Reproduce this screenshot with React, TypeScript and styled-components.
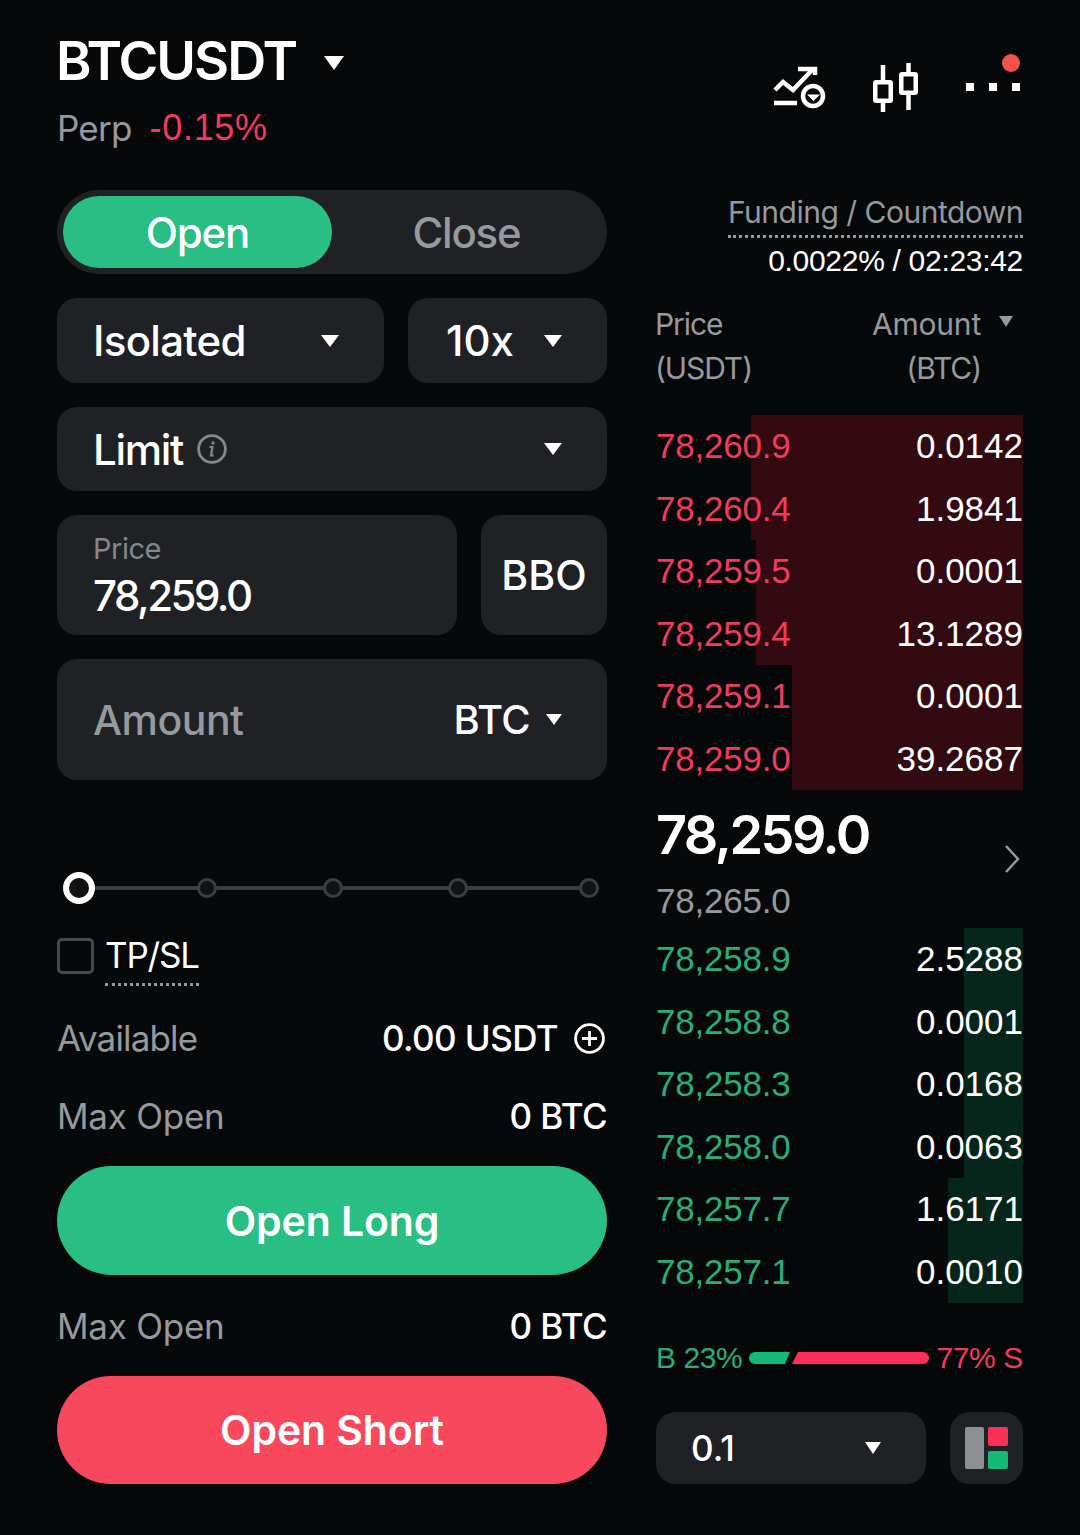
import * as React from 'react';
import styled, { createGlobalStyle } from 'styled-components';

const red = '#f8485e';
const green = '#29bf84';
const redText = '#f03a5f';
const greenText = '#27ae7c';
const panel = '#1f2125';
const muted = '#96999e';
const numeric = '"Liberation Sans", Arial, sans-serif';

const GlobalStyle = createGlobalStyle`
  html, body {
    margin: 0;
    padding: 0;
    background: #060809;
  }
  * {
    box-sizing: border-box;
  }
`;

const Page = styled.div`
  width: 1080px;
  height: 1535px;
  overflow: hidden;
  padding: 0 57px;
  background: #060809;
  color: #fff;
  font-family: Inter, "Liberation Sans", sans-serif;
`;

const Header = styled.header`
  display: flex;
  justify-content: space-between;
  height: 190px;
`;

const TitleBlock = styled.div`
  padding-top: 29px;
`;

const TitleRow = styled.div`
  display: flex;
  align-items: center;
  height: 62px;
  gap: 28px;
`;

const Title = styled.h1`
  margin: 0 0 0 -1px;
  font-size: 54px;
  font-weight: 600;
  letter-spacing: -2px;
`;

const TitleCaret = styled.div`
  margin-top: 6px;
`;

const SubRow = styled.div`
  display: flex;
  gap: 18px;
  margin-top: 17px;
  font-size: 35px;
  line-height: 40px;
`;

const Perp = styled.span`
  color: ${muted};
  letter-spacing: -0.8px;
`;

const Change = styled.span`
  color: ${redText};
  font-family: ${numeric};
  font-size: 36px;
  letter-spacing: 0.7px;
`;

const Toolbar = styled.div`
  display: flex;
  align-items: flex-start;
  gap: 40px;
  padding-top: 50px;
`;

const ToolIcon = styled.svg<{ $top?: number }>`
  display: block;
  flex: none;
  margin-top: ${({ $top }) => $top ?? 0}px;
`;

const Caret = styled.i<{ $w?: number; $h?: number; $color?: string }>`
  display: block;
  flex: none;
  width: 0;
  height: 0;
  border-left: ${({ $w }) => ($w ?? 18) / 2}px solid transparent;
  border-right: ${({ $w }) => ($w ?? 18) / 2}px solid transparent;
  border-top: ${({ $h }) => $h ?? 12}px solid ${({ $color }) => $color ?? '#fff'};
`;

const Columns = styled.div`
  display: grid;
  grid-template-columns: 550px 367px;
  gap: 49px;
`;

const LeftColumn = styled.section`
  display: flex;
  flex-direction: column;
`;

const Tabs = styled.div`
  display: grid;
  grid-template-columns: 269px 1fr;
  height: 84px;
  padding: 6px;
  border-radius: 42px;
  background: ${panel};
`;

const Tab = styled.div<{ $active?: boolean }>`
  display: flex;
  align-items: center;
  justify-content: center;
  border-radius: 36px;
  background: ${({ $active }) => ($active ? green : 'transparent')};
  color: ${({ $active }) => ($active ? '#fff' : muted)};
  font-size: 42px;
  font-weight: 500;
  letter-spacing: -1.2px;
`;

const FieldRow = styled.div`
  display: flex;
  gap: 24px;
  margin-top: 24px;
`;

const Field = styled.div<{ $width?: number; $height?: number; $pad?: number }>`
  display: flex;
  align-items: center;
  justify-content: space-between;
  flex: ${({ $width }) => ($width ? `0 0 ${$width}px` : '1 1 auto')};
  height: ${({ $height }) => $height ?? 85}px;
  padding: 0 45px 0 ${({ $pad }) => $pad ?? 36}px;
  border-radius: 20px;
  background: ${panel};
`;

const FieldText = styled.span<{ $spacing?: number }>`
  display: flex;
  align-items: center;
  gap: 14px;
  font-size: 42px;
  font-weight: 500;
  letter-spacing: ${({ $spacing }) => $spacing ?? -0.7}px;
`;

const PriceField = styled.div`
  display: flex;
  flex-direction: column;
  justify-content: center;
  flex: 1;
  height: 120px;
  padding: 0 36px;
  border-radius: 20px;
  background: ${panel};
`;

const PriceLabel = styled.span`
  margin-top: 2px;
  color: #85878b;
  font-size: 29px;
  line-height: 34px;
  letter-spacing: -0.5px;
`;

const PriceValue = styled.span`
  margin-top: 5px;
  font-size: 42px;
  line-height: 50px;
  font-weight: 500;
  letter-spacing: -2.5px;
`;

const BboButton = styled.div`
  display: flex;
  align-items: center;
  justify-content: center;
  width: 126px;
  height: 120px;
  border-radius: 20px;
  background: ${panel};
  font-size: 41px;
  font-weight: 500;
`;

const AmountLabel = styled.span`
  color: ${muted};
  font-size: 41px;
  font-weight: 500;
  letter-spacing: -0.5px;
`;

const AmountUnit = styled.span`
  display: flex;
  align-items: center;
  gap: 16px;
  font-size: 40px;
  font-weight: 500;
  letter-spacing: -0.6px;
`;

const Slider = styled.div`
  position: relative;
  display: flex;
  align-items: center;
  height: 32px;
  margin: 92px 0 0 6px;
`;

const SliderTrack = styled.div`
  position: absolute;
  left: 10px;
  right: 15px;
  top: 14px;
  height: 4px;
  background: #3a3c3f;
`;

const SliderDot = styled.div<{ $active?: boolean; $left?: number }>`
  position: relative;
  flex: none;
  width: ${({ $active }) => ($active ? 32 : 20)}px;
  height: ${({ $active }) => ($active ? 32 : 20)}px;
  margin-left: ${({ $left }) => $left ?? 0}px;
  border-radius: 50%;
  border: ${({ $active }) => ($active ? '6px solid #fff' : '3px solid #3c3e41')};
  background: #101214;
`;

const CheckRow = styled.div`
  display: flex;
  gap: 11px;
  margin-top: 34px;
  height: 48px;
`;

const Checkbox = styled.div`
  width: 37px;
  height: 36px;
  border: 3px solid #46484c;
  border-radius: 5px;
`;

const CheckLabel = styled.span`
  height: 48px;
  border-bottom: 3px dotted ${muted};
  font-size: 35px;
  line-height: 35px;
  letter-spacing: -1.2px;
`;

const InfoRow = styled.div<{ $top: number }>`
  display: flex;
  align-items: center;
  justify-content: space-between;
  height: 44px;
  margin-top: ${({ $top }) => $top}px;
`;

const InfoLabel = styled.span<{ $spacing: number }>`
  color: ${muted};
  font-size: 35px;
  letter-spacing: ${({ $spacing }) => $spacing}px;
`;

const InfoValue = styled.span`
  display: flex;
  align-items: center;
  gap: 16px;
  font-size: 35px;
  font-weight: 500;
  letter-spacing: -0.6px;
`;

const ActionButton = styled.div<{ $color: string; $height: number }>`
  display: flex;
  align-items: center;
  justify-content: center;
  height: ${({ $height }) => $height}px;
  margin-top: 28px;
  border-radius: 55px;
  background: ${({ $color }) => $color};
  font-size: 41px;
  font-weight: 600;
  letter-spacing: -0.1px;
`;

const RightColumn = styled.section`
  display: flex;
  flex-direction: column;
`;

const Funding = styled.div`
  display: flex;
  flex-direction: column;
  align-items: flex-end;
  height: 90px;
`;

const FundingLabel = styled.span`
  height: 48px;
  padding-top: 3px;
  border-bottom: 3px dotted ${muted};
  color: ${muted};
  font-size: 30px;
  line-height: 38px;
  letter-spacing: -0.5px;
`;

const FundingValue = styled.span`
  margin-top: 4px;
  font-family: ${numeric};
  font-size: 30px;
  line-height: 38px;
  letter-spacing: -0.3px;
`;

const BookHead = styled.div`
  display: flex;
  justify-content: space-between;
  height: 135px;
  padding-top: 22px;
  color: ${muted};
  font-size: 30px;
  line-height: 44px;
`;

const HeadCol = styled.div`
  display: flex;
  flex-direction: column;
  margin-left: -1px;
  letter-spacing: -1.1px;
`;

const HeadRight = styled(HeadCol)`
  align-items: flex-end;
  padding-right: 10px;
`;

const HeadTop = styled.span`
  display: flex;
  align-items: center;
  gap: 18px;
  letter-spacing: -0.2px;
`;

const HeadCaret = styled.div`
  margin-top: -6px;
`;

const HeadUnit = styled.span`
  padding-right: 32px;
`;

const Book = styled.div`
  display: flex;
  flex-direction: column;
  height: 375px;
`;

const BookRow = styled.div`
  position: relative;
  display: flex;
  align-items: center;
  justify-content: space-between;
  height: 62.5px;
  font-family: ${numeric};
  font-size: 35px;
`;

const DepthBar = styled.div<{ $color: string }>`
  position: absolute;
  top: 0;
  right: 0;
  bottom: 0;
  background: ${({ $color }) => $color};
`;

const RowPrice = styled.span<{ $color: string }>`
  position: relative;
  color: ${({ $color }) => $color};
  letter-spacing: -0.2px;
`;

const RowAmount = styled.span`
  position: relative;
`;

const Ticker = styled.div`
  display: flex;
  align-items: center;
  justify-content: space-between;
  height: 138px;
  padding-right: 2px;
`;

const TickerPrices = styled.div`
  display: flex;
  flex-direction: column;
  align-self: flex-start;
  padding-top: 13px;
`;

const LastPrice = styled.span`
  font-size: 54px;
  line-height: 64px;
  font-weight: 600;
  letter-spacing: -2.5px;
`;

const MarkPrice = styled.span`
  margin-top: 12px;
  color: ${muted};
  font-family: ${numeric};
  font-size: 35px;
  line-height: 44px;
  letter-spacing: -0.2px;
`;

const Ratio = styled.div`
  display: flex;
  align-items: center;
  height: 44px;
  margin-top: 33px;
  font-family: ${numeric};
  font-size: 30px;
  letter-spacing: -0.4px;
`;

const RatioText = styled.span<{ $color: string }>`
  flex: none;
  color: ${({ $color }) => $color};
`;

const RatioBar = styled.svg`
  display: block;
  flex: none;
  margin: 0 6px;
`;

const BottomRow = styled.div`
  display: flex;
  justify-content: space-between;
  margin-top: 32px;
`;

const StepSelect = styled.div`
  display: flex;
  align-items: center;
  justify-content: space-between;
  width: 270px;
  height: 72px;
  padding: 0 45px 0 35px;
  border-radius: 20px;
  background: ${panel};
  font-size: 35px;
  font-weight: 500;
`;

const LayoutButton = styled.div`
  display: flex;
  align-items: center;
  justify-content: center;
  width: 73px;
  height: 72px;
  border-radius: 20px;
  background: ${panel};
`;

const asks = [
  { price: '78,260.9', amount: '0.0142', bar: 272 },
  { price: '78,260.4', amount: '1.9841', bar: 272 },
  { price: '78,259.5', amount: '0.0001', bar: 267 },
  { price: '78,259.4', amount: '13.1289', bar: 267 },
  { price: '78,259.1', amount: '0.0001', bar: 231 },
  { price: '78,259.0', amount: '39.2687', bar: 231 },
];

const bids = [
  { price: '78,258.9', amount: '2.5288', bar: 59 },
  { price: '78,258.8', amount: '0.0001', bar: 59 },
  { price: '78,258.3', amount: '0.0168', bar: 59 },
  { price: '78,258.0', amount: '0.0063', bar: 59 },
  { price: '78,257.7', amount: '1.6171', bar: 75 },
  { price: '78,257.1', amount: '0.0010', bar: 75 },
];

const App: React.FC = () => {
  return (
    <Page>
      <GlobalStyle />
      <Header>
        <TitleBlock>
          <TitleRow>
            <Title>BTCUSDT</Title>
            <TitleCaret>
              <Caret $w={21} $h={14} />
            </TitleCaret>
          </TitleRow>
          <SubRow>
            <Perp>Perp</Perp>
            <Change>-0.15%</Change>
          </SubRow>
        </TitleBlock>
        <Toolbar>
          <ToolIcon $top={10} width="60" height="52" viewBox="0 0 60 52" fill="none" stroke="#fff" strokeWidth="4.5">
            <path d="M5 30 L13 22 L23 30 L42 10" />
            <path d="M28 9 H45 V15" />
            <path d="M4 43 H27" />
            <circle cx="43" cy="36" r="10" />
            <path d="M37 34.5 H50 L43.5 41 Z" fill="#fff" stroke="none" />
          </ToolIcon>
          <ToolIcon $top={10} width="52" height="56" viewBox="0 0 52 56" fill="none" stroke="#fff" strokeWidth="4.5">
            <path d="M13 5 V20 M13 43 V52 M38.5 3 V12 M38.5 35 V50" />
            <rect x="5.25" y="22.25" width="15.5" height="18.5" rx="1" />
            <rect x="31.25" y="14.25" width="14.5" height="18.5" rx="1" />
          </ToolIcon>
          <ToolIcon width="61" height="45" viewBox="0 0 61 45">
            <rect x="4" y="33" width="8" height="8" fill="#fff" />
            <rect x="27" y="33" width="8" height="8" fill="#fff" />
            <rect x="50" y="33" width="8" height="8" fill="#fff" />
            <circle cx="49" cy="13" r="9" fill="#f4524d" />
          </ToolIcon>
        </Toolbar>
      </Header>
      <Columns>
        <LeftColumn>
          <Tabs>
            <Tab $active>Open</Tab>
            <Tab>Close</Tab>
          </Tabs>
          <FieldRow>
            <Field $width={327}>
              <FieldText>Isolated</FieldText>
              <Caret />
            </Field>
            <Field $pad={38}>
              <FieldText $spacing={0}>10x</FieldText>
              <Caret />
            </Field>
          </FieldRow>
          <FieldRow>
            <Field $height={84}>
              <FieldText $spacing={-1.3}>
                Limit
                <svg width="30" height="30" viewBox="0 0 30 30" fill="none" stroke="#85878b" strokeWidth="2.8">
                  <circle cx="15" cy="15" r="13.4" />
                  <path d="M12.5 13 H15.5 L14 21.5 H16.5" strokeWidth="2.2" />
                  <path d="M16 7.5 V10.5" />
                </svg>
              </FieldText>
              <Caret />
            </Field>
          </FieldRow>
          <FieldRow>
            <PriceField>
              <PriceLabel>Price</PriceLabel>
              <PriceValue>78,259.0</PriceValue>
            </PriceField>
            <BboButton>BBO</BboButton>
          </FieldRow>
          <FieldRow>
            <Field $height={121}>
              <AmountLabel>Amount</AmountLabel>
              <AmountUnit>
                BTC
                <Caret $w={16} $h={11} />
              </AmountUnit>
            </Field>
          </FieldRow>
          <Slider>
            <SliderTrack />
            <SliderDot $active />
            <SliderDot $left={102} />
            <SliderDot $left={106} />
            <SliderDot $left={105} />
            <SliderDot $left={111} />
          </Slider>
          <CheckRow>
            <Checkbox />
            <CheckLabel>TP/SL</CheckLabel>
          </CheckRow>
          <InfoRow $top={30}>
            <InfoLabel $spacing={-0.85}>Available</InfoLabel>
            <InfoValue>
              0.00 USDT
              <svg width="31" height="31" viewBox="0 0 31 31" fill="none" stroke="#fff" strokeWidth="2.8" style={{ marginRight: 2 }}>
                <circle cx="15.5" cy="15.5" r="13.9" />
                <path d="M15.5 8 V23 M8 15.5 H23" />
              </svg>
            </InfoValue>
          </InfoRow>
          <InfoRow $top={34}>
            <InfoLabel $spacing={-0.25}>Max Open</InfoLabel>
            <InfoValue>0 BTC</InfoValue>
          </InfoRow>
          <ActionButton $color={green} $height={109}>Open Long</ActionButton>
          <InfoRow $top={29}>
            <InfoLabel $spacing={-0.25}>Max Open</InfoLabel>
            <InfoValue>0 BTC</InfoValue>
          </InfoRow>
          <ActionButton $color={red} $height={108}>Open Short</ActionButton>
        </LeftColumn>
        <RightColumn>
          <Funding>
            <FundingLabel>Funding / Countdown</FundingLabel>
            <FundingValue>0.0022% / 02:23:42</FundingValue>
          </Funding>
          <BookHead>
            <HeadCol>
              <span>Price</span>
              <span>(USDT)</span>
            </HeadCol>
            <HeadRight>
              <HeadTop>
                Amount
                <HeadCaret>
                  <Caret $w={15} $h={11} $color={muted} />
                </HeadCaret>
              </HeadTop>
              <HeadUnit>(BTC)</HeadUnit>
            </HeadRight>
          </BookHead>
          <Book>
            {asks.map((row) => (
              <BookRow key={row.price}>
                <DepthBar $color="#330a11" style={{ width: row.bar }} />
                <RowPrice $color={redText}>{row.price}</RowPrice>
                <RowAmount>{row.amount}</RowAmount>
              </BookRow>
            ))}
          </Book>
          <Ticker>
            <TickerPrices>
              <LastPrice>78,259.0</LastPrice>
              <MarkPrice>78,265.0</MarkPrice>
            </TickerPrices>
            <svg width="18" height="30" viewBox="0 0 18 30" fill="none" stroke={muted} strokeWidth="2.5">
              <path d="M3 2 L15 15 L3 28" />
            </svg>
          </Ticker>
          <Book>
            {bids.map((row) => (
              <BookRow key={row.price}>
                <DepthBar $color="#07261b" style={{ width: row.bar }} />
                <RowPrice $color={greenText}>{row.price}</RowPrice>
                <RowAmount>{row.amount}</RowAmount>
              </BookRow>
            ))}
          </Book>
          <Ratio>
            <RatioText $color={greenText}>B 23%</RatioText>
            <RatioBar width="182" height="14" viewBox="0 0 182 14">
              <path d="M7 1 H42 L37 13 H7 A6 6 0 0 1 7 1 Z" fill="#12b979" />
              <path d="M50 1 H175 A6 6 0 0 1 175 13 H44 Z" fill="#fb2f58" />
            </RatioBar>
            <RatioText $color={redText}>77% S</RatioText>
          </Ratio>
          <BottomRow>
            <StepSelect>
              0.1
              <Caret $w={17} $h={12} />
            </StepSelect>
            <LayoutButton>
              <svg width="43" height="42" viewBox="0 0 43 42">
                <rect x="0" y="0" width="19" height="42" rx="2" fill="#8d8f93" />
                <rect x="23" y="0" width="20" height="19" rx="2" fill="#fb2f58" />
                <rect x="23" y="24" width="20" height="18" rx="2" fill="#12b979" />
              </svg>
            </LayoutButton>
          </BottomRow>
        </RightColumn>
      </Columns>
    </Page>
  );
};

export default App;
